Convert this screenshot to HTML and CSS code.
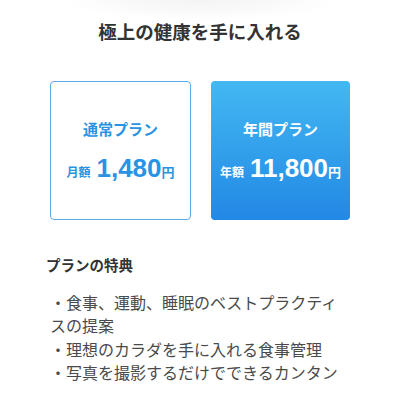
FILE: index.html
```html
<!DOCTYPE html>
<html lang="ja">

<head>
   <meta charset="UTF-8">
   <title>プラン</title>
   <link rel="stylesheet" href="styles.css">
</head>

<body>
   <div class="page">
      <!-- 見出し -->
      <h1 class="title">極上の健康を手に入れる</h1>

      <!-- プラン選択 -->
      <div class="plans">
         <div class="plan plan-monthly">
            <div class="plan-name">通常プラン</div>
            <div class="plan-price">
               <span class="price-label">月額</span>
               <span class="price-num">1,480</span><span class="price-yen">円</span>
            </div>
         </div>
         <div class="plan plan-yearly">
            <div class="plan-name">年間プラン</div>
            <div class="plan-price">
               <span class="price-label">年額</span>
               <span class="price-num">11,800</span><span class="price-yen">円</span>
            </div>
         </div>
      </div>

      <!-- 特典 -->
      <h2 class="benefits-title">プランの特典</h2>
      <ul class="benefits">
         <li>・食事、運動、睡眠のベストプラクティスの提案</li>
         <li>・理想のカラダを手に入れる食事管理</li>
         <li>・写真を撮影するだけでできるカンタン</li>
      </ul>
   </div>
</body>

</html>
```

FILE: styles.css
```css
/* ページ全体 */
body {
   margin: 0;
   background: #ffffff;
   font-family: "Liberation Sans", "Noto Sans CJK JP", sans-serif;
   color: #333;
}

.page {
   padding: 0 50px;
   min-height: 400px;
   background: radial-gradient(ellipse 140px 20px at 200px 0, #f4f4f4 0%, #fafafa 60%, rgba(255, 255, 255, 0) 100%) no-repeat;
}

/* 見出し */
.title {
   margin: 0;
   padding-top: 21px;
   font-size: 18.5px;
   line-height: 24px;
   text-align: center;
   font-weight: bold;
   color: #333;
}

/* プランカード */
.plans {
   display: flex;
   gap: 20px;
   margin-top: 36px;
}

.plan {
   flex: 1;
   height: 139px;
   box-sizing: border-box;
   border-radius: 4px;
   display: flex;
   flex-direction: column;
   align-items: center;
   justify-content: center;
   padding-top: 2px;
}

.plan-monthly {
   border: 1.5px solid #5aace9;
   color: #2893e4;
}

.plan-yearly {
   background: linear-gradient(180deg, #43b8f2 0%, #2288e5 100%);
   color: #ffffff;
}

.plan-name {
   font-size: 15px;
   font-weight: bold;
   line-height: 20px;
}

.plan-price {
   margin-top: 13px;
   display: flex;
   align-items: baseline;
   font-weight: bold;
}

.price-label {
   font-size: 12px;
   margin-right: 6px;
}

.price-num {
   font-size: 26px;
   line-height: 30px;
}

.price-yen {
   font-size: 13px;
}

/* 特典 */
.benefits-title {
   margin: 36px 0 0 -4px;
   font-size: 14.5px;
   line-height: 20px;
   font-weight: bold;
   color: #333;
}

.benefits {
   list-style: none;
   margin: 16px 0 0;
   padding: 0;
   font-size: 16px;
   line-height: 23.3px;
   color: #4a4a4a;
}
```
